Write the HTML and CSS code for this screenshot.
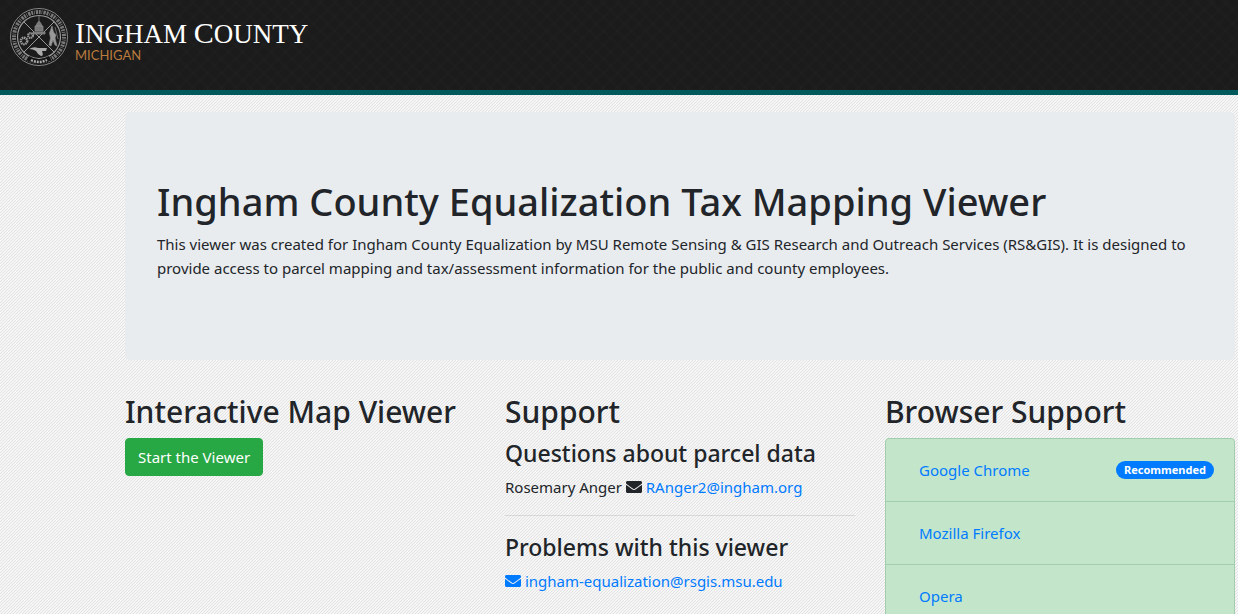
FILE: index.html
```html
<!DOCTYPE html>
<html lang="en">
<head>
<meta charset="utf-8">
<meta name="viewport" content="width=device-width, initial-scale=1">
<title>Ingham County Equalization Tax Mapping Viewer</title>
<link rel="stylesheet" href="styles.css">
</head>
<body>
<header class="site-header">
  <a class="brand" href="#">
    <svg class="seal" viewBox="0 0 60 60" aria-hidden="true">
      <circle cx="30" cy="30" r="28.5" fill="#141414" stroke="#888" stroke-width="1"/>
      <circle cx="30" cy="30" r="25" fill="none" stroke="#999" stroke-width="4" stroke-dasharray="1.8 .9 .8 1.1 2.400 .8" opacity=".75"/>
      <circle cx="30" cy="30" r="21.500" fill="#1b1b1b" stroke="#999" stroke-width="1.200"/>
      <path d="M15 15 45 45M45 15 15 45" stroke="#999" stroke-width="1"/>
      <path d="M30 9v6M27 19q3-9 6 0zM26 19h8v5h-8zM24 25h12v2H24z" fill="#777" stroke="#888" stroke-width=".8"/>
      <g fill="none" stroke="#999"><circle cx="15" cy="34" r="3.200" stroke-width="2.500" stroke-dasharray="1.500 .6"/><circle cx="21.500" cy="28.500" r="2.400" stroke-width="2.200" stroke-dasharray="1.300 .5"/></g>
      <path d="m43 19 1.500 6 2.500 3-1 3 2 8-2-1-2-5-2 6-2-1 1.500-7-1-5zM46 20l3 12" fill="#999" stroke="#888" stroke-width=".7"/>
      <path d="M20 42q5-3 9-1h9l-1 3h-4q2 5-1 5-3-1-5-5-3-2-7-2z" fill="#aaa"/>
      <path d="M19 51q11 7 22 0" fill="none" stroke="#141414" stroke-width="5"/>
      <path d="M22 53q8 4 16 0" fill="none" stroke="#aaa" stroke-width="2.500" stroke-dasharray="2 1"/>
    </svg>
    <span class="brand-text">
      <span class="county"><span class="cap">I</span>NGHAM <span class="cap">C</span>OUNTY</span>
      <span class="state">MICHIGAN</span>
    </span>
  </a>
</header>
<main class="container">
  <section class="jumbotron">
    <h1>Ingham County Equalization Tax Mapping Viewer</h1>
    <p>This viewer was created for Ingham County Equalization by MSU Remote Sensing &amp; GIS Research and Outreach Services (RS&amp;GIS). It is designed to provide access to parcel mapping and tax/assessment information for the public and county employees.</p>
  </section>
  <div class="row">
    <section>
      <h2>Interactive Map Viewer</h2>
      <button class="btn" type="button">Start the Viewer</button>
    </section>
    <section>
      <h2>Support</h2>
      <h3>Questions about parcel data</h3>
      <p>Rosemary Anger <svg class="icon" viewBox="0 0 512 512" aria-hidden="true"><path d="M502.300 190.800c3.900-3.100 9.700-.2 9.700 4.700V400c0 26.500-21.500 48-48 48H48c-26.500 0-48-21.500-48-48V195.600c0-5 5.700-7.800 9.700-4.700 22.400 17.400 52.100 39.500 154.100 113.600 21.100 15.400 56.700 47.800 92.200 47.600 35.700.3 72-32.800 92.300-47.600 102-74.100 131.600-96.300 154-113.700zM256 320c23.200.4 56.600-29.200 73.400-41.400 132.700-96.300 142.800-104.700 173.400-128.700 5.800-4.500 9.200-11.500 9.200-18.900v-19c0-26.500-21.500-48-48-48H48c-26.500 0-48 21.500-48 48v19c0 7.400 3.400 14.300 9.200 18.900 30.600 23.900 40.700 32.400 173.400 128.700 16.800 12.200 50.200 41.800 73.400 41.400z"/></svg> <a href="mailto:RAnger2@ingham.org">RAnger2@ingham.org</a></p>
      <hr>
      <h3>Problems with this viewer</h3>
      <p><a href="mailto:ingham-equalization@rsgis.msu.edu"><svg class="icon" viewBox="0 0 512 512" aria-hidden="true"><path d="M502.300 190.800c3.900-3.100 9.700-.2 9.700 4.700V400c0 26.500-21.500 48-48 48H48c-26.500 0-48-21.500-48-48V195.600c0-5 5.700-7.800 9.700-4.700 22.400 17.400 52.100 39.500 154.100 113.600 21.100 15.400 56.700 47.800 92.200 47.600 35.700.3 72-32.800 92.300-47.600 102-74.100 131.600-96.300 154-113.700zM256 320c23.200.4 56.600-29.200 73.400-41.400 132.700-96.300 142.800-104.700 173.400-128.700 5.800-4.500 9.200-11.500 9.200-18.900v-19c0-26.500-21.500-48-48-48H48c-26.500 0-48 21.500-48 48v19c0 7.400 3.400 14.300 9.200 18.900 30.600 23.900 40.700 32.400 173.400 128.700 16.800 12.200 50.200 41.800 73.400 41.400z"/></svg> ingham-equalization@rsgis.msu.edu</a></p>
    </section>
    <section>
      <h2>Browser Support</h2>
      <ul class="browsers">
        <li><a href="#">Google Chrome</a><span class="badge">Recommended</span></li>
        <li><a href="#">Mozilla Firefox</a></li>
        <li><a href="#">Opera</a></li>
      </ul>
    </section>
  </div>
</main>
</body>
</html>
```
FILE: styles.css
```css
* { box-sizing: border-box; }
html { overflow: hidden; }
body {
  margin: 0;
  font: 15px/24px "Segoe UI", "Noto Sans", "Open Sans", sans-serif;
  color: #212529;
  background: #f6f6f6 url("data:image/svg+xml,%3Csvg xmlns='http://www.w3.org/2000/svg' width='3' height='3' shape-rendering='crispEdges'%3E%3Cpath fill='%23e2e2e2' d='M2 0h1v1H2zM1 1h1v1H1zM0 2h1v1H0z'/%3E%3C/svg%3E");
}
h1, h2, h3 { margin: 0; padding-bottom: 7px; font-weight: 500; }
h1 { padding-top: 1px; font-size: 38px; line-height: 48px; }
h2 { padding-top: 1px; font-size: 30px; line-height: 38px; }
h3 { padding-top: 1px; font-size: 23px; line-height: 29px; }
p { margin: 0 0 16px; }
a { color: #007bff; text-decoration: none; }
hr { margin: 16px 0; border: 0; border-top: 1px solid rgba(0, 0, 0, .1); }
.site-header {
  padding: 7px 9px 23px;
  border-bottom: 5px solid #005a5b;
  background:
    repeating-linear-gradient(45deg, transparent 0 7px, rgba(255, 255, 255, .008) 7px 10px),
    repeating-linear-gradient(135deg, transparent 0 7px, rgba(255, 255, 255, .008) 7px 10px),
    #1b1b1b;
}
.brand { display: flex; gap: 6px; }
.seal { width: 60px; height: 60px; }
.brand-text { display: flex; flex-direction: column; padding-top: 12px; }
.county { color: #fff; font: 27px/28px "Liberation Serif", serif; white-space: nowrap; }
.cap { font-size: 30px; }
.state { color: #b97a3d; font: 13px/14px Lato, sans-serif; }
.container { padding: 17px 3px 0 125px; }
.jumbotron { margin-bottom: 32px; padding: 64px 32px; border-radius: 5px; background: #e9ecef; }
.row { display: grid; grid-template-columns: repeat(3, 1fr); gap: 30px; }
.btn {
  padding: 6px 12px;
  border: 1px solid #28a745;
  border-radius: 4px;
  background: #28a745;
  color: #fff;
  font: inherit;
}
.icon { width: 16px; height: 16px; fill: currentColor; vertical-align: -2px; }
.browsers { margin: 0; padding: 0; list-style: none; border: 1px solid #a3ceae; border-radius: 4px; background: #c3e6cb; }
.browsers li { display: flex; align-items: center; justify-content: space-between; padding: 19px 20px 19px 33px; border-bottom: 1px solid #a3ceae; }
.badge { padding: 3px 8px; border-radius: 10px; background: #007bff; color: #fff; font-size: 11px; line-height: 12px; font-weight: 700; }
```
